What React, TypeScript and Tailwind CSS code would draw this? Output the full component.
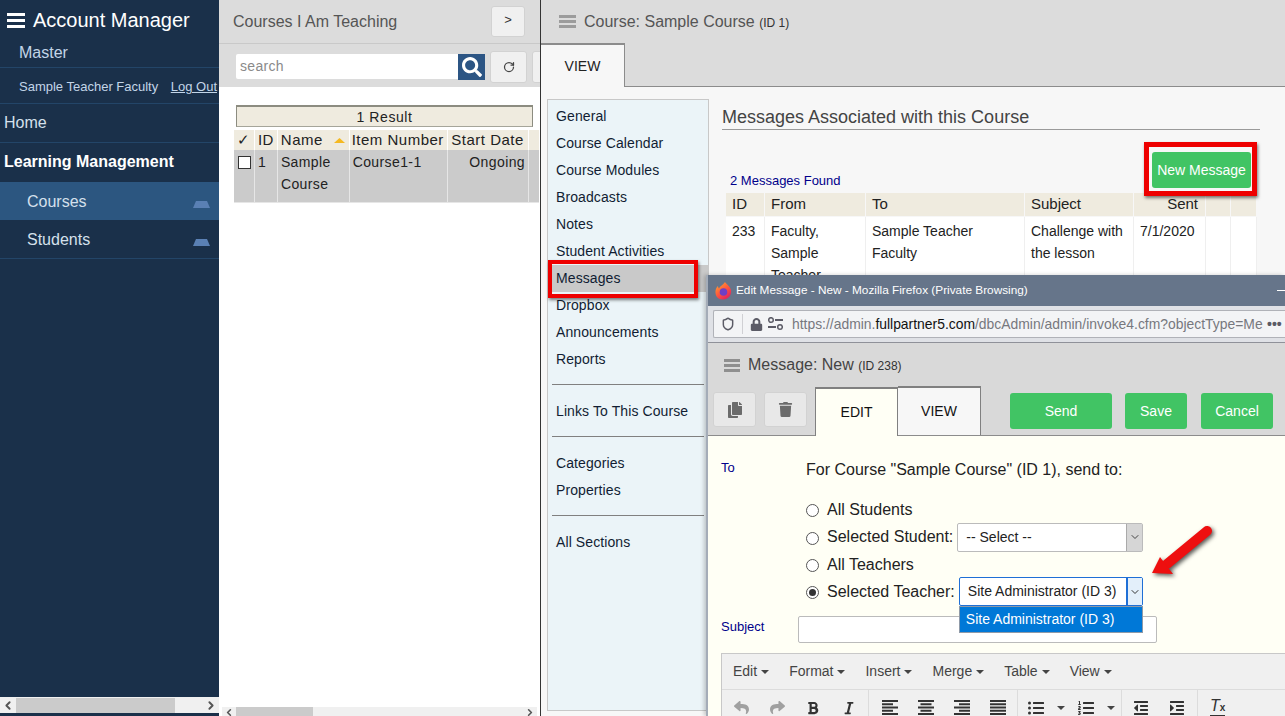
import type { ReactNode } from 'react';
import { ChevronDown, ChevronLeft, ChevronRight, RotateCw, Shield } from 'lucide-react';
import {
  FaBold,
  FaCopy,
  FaIndent,
  FaItalic,
  FaListOl,
  FaListUl,
  FaLock,
  FaOutdent,
  FaReply,
  FaSearch,
  FaShare,
  FaTrash,
} from 'react-icons/fa';

const courseNav = ['General', 'Course Calendar', 'Course Modules', 'Broadcasts', 'Notes', 'Student Activities'];
const editorMenu = ['Edit', 'Format', 'Insert', 'Merge', 'Table', 'View'];

function Bars({ color, w = 18, bar = 3, gap = 3 }: { color: string; w?: number; bar?: number; gap?: number }) {
  return (
    <div className="flex flex-col" style={{ width: w, gap }}>
      <div className={color} style={{ height: bar }} />
      <div className={color} style={{ height: bar }} />
      <div className={color} style={{ height: bar }} />
    </div>
  );
}

function Tray() {
  return (
    <svg width="17" height="7" viewBox="0 0 17 7" className="mt-[5px] shrink-0">
      <polygon points="3,0 14,0 17,7 0,7" fill="#5a80b4" />
    </svg>
  );
}

function Sidebar() {
  return (
    <aside className="relative flex h-full w-[219px] shrink-0 flex-col bg-[#1a304a] text-[#d5e0ec]">
      <div className="flex h-[41px] items-center gap-[8px] pl-[7px] pb-[1px]">
        <Bars color="bg-white" />
        <span className="text-[20px] text-white">Account Manager</span>
      </div>
      <div className="flex h-[27px] items-start border-b border-[#234568] pl-[19px] text-[16px] leading-[23px] text-[#c3d5e8]">
        Master
      </div>
      <div className="flex h-[36px] items-center justify-between border-b border-[#234568] pl-[19px] pr-[2px] pt-[3px] text-[13px] text-[#c3d5e8]">
        <span>Sample Teacher Faculty</span>
        <span className="underline">Log Out</span>
      </div>
      <div className="flex h-[39px] items-center border-b border-[#234568] pl-[4px] text-[16px]">Home</div>
      <div className="flex h-[39px] items-center pb-[2px] pl-[4px] text-[16px] font-bold text-white">Learning Management</div>
      <div className="flex h-[38px] items-center justify-between bg-[#2c5680] pl-[27px] pr-[9px] pt-[1px] text-[16px]">
        <span>Courses</span>
        <Tray />
      </div>
      <div className="flex h-[39px] items-center justify-between border-b border-[#234568] pl-[27px] pr-[9px] pt-[1px] text-[16px]">
        <span>Students</span>
        <Tray />
      </div>
      <div className="absolute bottom-[3px] left-0 right-0 flex h-[16px] items-center bg-[#f0f0f0] text-[#555]">
        <ChevronLeft size={13} strokeWidth={3.5} className="w-[16px] shrink-0" />
        <div className="h-[15px] w-[159px] bg-[#cbcbcb]" />
        <div className="flex-1" />
        <ChevronRight size={13} strokeWidth={3.5} className="w-[16px] shrink-0" />
      </div>
    </aside>
  );
}

function CoursesPanel() {
  return (
    <section className="relative flex h-full w-[322px] shrink-0 flex-col overflow-hidden border-r border-[#333] bg-white">
      <div className="flex h-[44px] shrink-0 items-center justify-between border-b border-[#c9c9c9] bg-[#dcdcdc] pl-[14px] pr-[15px] text-[16px] text-[#555]">
        <span>Courses I Am Teaching</span>
        <div className="flex h-[31px] w-[34px] items-start justify-center rounded-[3px] border border-[#d2d2d2] bg-[#f0f0f0] pt-[3px] text-[13px] text-[#333]">
          &gt;
        </div>
      </div>
      <div className="flex h-[43px] shrink-0 items-center bg-[#dcdcdc] pl-[17px] pt-[2px]">
        <div className="flex h-[25px] w-[222px] shrink-0 items-center rounded-l-[2px] bg-white pl-[4px] text-[14px] tracking-[0.3px] text-[#8a8a8a]">
          search
        </div>
        <div className="flex h-[26px] w-[27px] shrink-0 items-center justify-center bg-[#2c5584] text-white">
          <FaSearch size={20} />
        </div>
        <div className="ml-[5px] flex h-[32px] w-[37px] shrink-0 items-center justify-center rounded-[3px] border border-[#d2d2d2] bg-[#f0f0f0] text-[#444]">
          <RotateCw size={12} strokeWidth={2.5} />
        </div>
        <div className="ml-[5px] h-[32px] w-[20px] shrink-0 rounded-[3px] border border-[#d2d2d2] bg-[#f0f0f0]" />
      </div>
      <div className="ml-[17px] mt-[18px] flex h-[22px] w-[297px] shrink-0 items-center justify-center border border-t-2 border-[#8c8c80] border-b-[#a5a59a] bg-[#efebdf] pt-[1px] text-[14px] tracking-[0.6px] text-[#222]">
        1 Result
      </div>
      <div className="ml-[15px] mt-[3px] flex w-[305px] shrink-0 flex-col overflow-hidden text-[14px] tracking-[0.4px] text-[#222]">
        <div className="flex h-[20px] gap-[1px] bg-white text-[15px] tracking-[0.5px]">
          <div className="flex w-[20px] items-center justify-center bg-[#efebdf]">✓</div>
          <div className="flex w-[22px] items-center justify-center bg-[#efebdf]">ID</div>
          <div className="flex w-[71px] items-center justify-between bg-[#efebdf] pl-[3px] pr-[4px]">
            <span>Name</span>
            <svg width="11" height="5" viewBox="0 0 11 5">
              <polygon points="5.5,0 11,5 0,5" fill="#f5b921" />
            </svg>
          </div>
          <div className="flex w-[98px] items-center bg-[#efebdf] pl-[2px] whitespace-nowrap">Item Number</div>
          <div className="flex w-[80px] items-center bg-[#efebdf] pl-[3px] whitespace-nowrap">Start Date</div>
          <div className="w-[10px] bg-[#efebdf]" />
        </div>
        <div className="flex h-[53px] gap-[1px] border-b border-[#e6e6e6] bg-[#e6e6e6] leading-[22px]">
          <div className="w-[20px] bg-[#cbcbcb] pl-[4px] pt-[6px]">
            <div className="h-[13px] w-[13px] border border-[#333] bg-white" />
          </div>
          <div className="w-[22px] bg-[#cbcbcb] pl-[3px] pt-[1px]">1</div>
          <div className="w-[71px] bg-[#cbcbcb] pl-[3px] pt-[1px]">Sample Course</div>
          <div className="w-[98px] bg-[#cbcbcb] pl-[3px] pt-[1px]">Course1-1</div>
          <div className="w-[80px] bg-[#cbcbcb] pr-[3px] pt-[1px] text-right">Ongoing</div>
          <div className="w-[10px] bg-[#cbcbcb]" />
        </div>
      </div>
      <div className="absolute bottom-0 left-[3px] right-[3px] flex h-[9px] bg-[#f0f0f0] text-[#555]">
        <ChevronLeft size={11} strokeWidth={3.5} className="w-[14px] shrink-0" />
        <div className="h-[9px] w-[77px] bg-[#cbcbcb]" />
        <div className="flex-1" />
        <ChevronRight size={11} strokeWidth={3.5} className="w-[14px] shrink-0" />
      </div>
    </section>
  );
}

function Hr() {
  return <div className="mx-[4px] mb-[13px] mt-[11px] h-px bg-[#808080]" />;
}

function NavItem({ label, active }: { label: string; active?: boolean }) {
  return (
    <div className={`flex h-[27px] items-center pl-[8px] ${active ? 'bg-[#c9c9c9]' : ''}`}>{label}</div>
  );
}

function CourseNav() {
  return (
    <nav className="h-[612px] w-[162px] shrink-0 border border-[#c8c8c8] bg-[#ebf4f8] pt-[3px] text-[14px] tracking-[0.1px] text-[#111d33]">
      {courseNav.map((n) => (
        <NavItem key={n} label={n} />
      ))}
      <NavItem label="Messages" active />
      <NavItem label="Dropbox" />
      <NavItem label="Announcements" />
      <NavItem label="Reports" />
      <Hr />
      <NavItem label="Links To This Course" />
      <Hr />
      <NavItem label="Categories" />
      <NavItem label="Properties" />
      <Hr />
      <NavItem label="All Sections" />
    </nav>
  );
}

function MessagesTable() {
  const cols = ['w-[38px]', 'w-[100px]', 'w-[158px]', 'w-[108px]', 'w-[71px]', 'w-[24px]', 'w-[25px]'];
  return (
    <div className="w-[531px] text-[14px] text-[#222]">
      <div className="flex h-[23px] gap-[1px] text-[15px]">
        <div className={`${cols[0]} flex items-center bg-[#efebdf] pl-[6px]`}>ID</div>
        <div className={`${cols[1]} flex items-center bg-[#efebdf] pl-[6px]`}>From</div>
        <div className={`${cols[2]} flex items-center bg-[#efebdf] pl-[6px]`}>To</div>
        <div className={`${cols[3]} flex items-center bg-[#efebdf] pl-[6px]`}>Subject</div>
        <div className={`${cols[4]} flex items-center justify-end bg-[#efebdf] pr-[7px]`}>Sent</div>
        <div className={`${cols[5]} bg-[#efebdf]`} />
        <div className={`${cols[6]} bg-[#efebdf]`} />
      </div>
      <div className="mt-[1px] flex h-[70px] gap-[1px] bg-[#efefef] leading-[22px]">
        <div className={`${cols[0]} bg-white pl-[6px] pt-[3px]`}>233</div>
        <div className={`${cols[1]} bg-white pl-[6px] pt-[3px]`}>Faculty, Sample Teacher</div>
        <div className={`${cols[2]} bg-white pl-[6px] pr-[40px] pt-[3px]`}>Sample Teacher Faculty</div>
        <div className={`${cols[3]} bg-white pl-[6px] pt-[3px]`}>Challenge with the lesson</div>
        <div className={`${cols[4]} bg-white pl-[6px] pt-[3px]`}>7/1/2020</div>
        <div className={`${cols[5]} bg-white`} />
        <div className={`${cols[6]} bg-white`} />
      </div>
    </div>
  );
}

function CoursePanel() {
  return (
    <section className="flex h-full min-w-0 flex-1 flex-col bg-[#f7f7f7]">
      <div className="flex h-[43px] shrink-0 items-center gap-[8px] bg-[#dcdcdc] pl-[18px] text-[16px] text-[#555]">
        <Bars color="bg-[#9c9c9c]" w={17} bar={3} gap={2} />
        <span>
          Course: Sample Course <span className="text-[12px] text-[#333]">(ID 1)</span>
        </span>
      </div>
      <div className="flex h-[44px] shrink-0 items-stretch border-b border-[#8c8c8c] bg-[#dcdcdc]">
        <div className="-mb-px flex w-[84px] items-center justify-center border-r border-t-2 border-[#8c8c8c] bg-[#f7f7f7] text-[14px] text-[#222]">
          VIEW
        </div>
      </div>
      <div className="flex min-h-0 flex-1 pl-[6px] pt-[12px]">
        <CourseNav />
        <div className="ml-[13px] min-w-0 flex-1">
          <div className="mr-[25px] flex h-[31px] items-center border-b border-[#9a9a9a] pt-[7px] text-[18px] text-[#444]">
            Messages Associated with this Course
          </div>
          <div className="mr-[34px] mt-[22px] flex h-[41px] items-end justify-between">
            <span className="mb-[5px] pl-[8px] text-[13px] leading-[14px] text-[#00008b]">2 Messages Found</span>
            <div className="flex h-[36px] w-[99px] items-center justify-center self-start rounded-[3px] bg-[#41c464] text-[14px] text-white">
              New Message
            </div>
          </div>
          <div className="pl-[4px]">
            <MessagesTable />
          </div>
        </div>
      </div>
    </section>
  );
}

function Radio({ on }: { on?: boolean }) {
  return (
    <div className="mt-[2px] flex h-[13px] w-[13px] shrink-0 items-center justify-center rounded-full border border-[#555] bg-white">
      {on && <div className="h-[7px] w-[7px] rounded-full bg-[#333]" />}
    </div>
  );
}

function FirefoxLogo() {
  return (
    <svg width="17" height="18" viewBox="0 0 17 18">
      <defs>
        <linearGradient id="ff" x1="0" y1="0" x2="0.7" y2="1">
          <stop offset="0" stopColor="#ffb02e" />
          <stop offset="0.55" stopColor="#ff5a3c" />
          <stop offset="1" stopColor="#e3215f" />
        </linearGradient>
      </defs>
      <path d="M10 0c1 2 5 4 6 8 1 5-3 9.500-8 9.500S0 14 0.500 9C1 6 2 5 3 4c0 1 .5 2 1 2.500C5 4 8 3 10 0z" fill="url(#ff)" />
      <circle cx="8.500" cy="10" r="3.800" fill="#6f3fc4" />
    </svg>
  );
}

function TuneIcon() {
  return (
    <svg width="15" height="14" viewBox="0 0 15 14" fill="#5b5b66">
      <circle cx="3" cy="3" r="2.300" fill="none" stroke="#5b5b66" strokeWidth="1.500" />
      <rect x="7" y="2" width="8" height="2" />
      <rect x="0" y="9" width="8" height="2" />
      <circle cx="12" cy="10" r="2.300" fill="none" stroke="#5b5b66" strokeWidth="1.500" />
    </svg>
  );
}

function GreenButton({ label, w }: { label: string; w: string }) {
  return (
    <div className={`flex h-[36px] items-center justify-center rounded-[3px] bg-[#41c464] text-[14px] text-white ${w}`}>
      {label}
    </div>
  );
}

// five line tinymce style alignment glyph, short lines placed per alignment
function AlignIcon({ align }: { align: 'left' | 'center' | 'right' | 'justify' }) {
  const short = align === 'justify' ? 16 : 11;
  const x = align === 'left' || align === 'justify' ? 0 : align === 'center' ? 2.5 : 5;
  return (
    <svg width="16" height="15" viewBox="0 0 16 15" fill="#333">
      <rect x="0" y="0" width="16" height="2" />
      <rect x={x} y="3.250" width={short} height="2" />
      <rect x="0" y="6.500" width="16" height="2" />
      <rect x={x} y="9.750" width={short} height="2" />
      <rect x="0" y="13" width="16" height="2" />
    </svg>
  );
}

function Cell({ w = 'w-[36px]', children }: { w?: string; children: ReactNode }) {
  return <div className={`flex shrink-0 items-center justify-center ${w}`}>{children}</div>;
}

function Caret() {
  return <div className="h-0 w-0 border-x-[4px] border-t-[4px] border-x-transparent border-t-[#444]" />;
}

function Sep() {
  return <div className="h-[28px] w-px shrink-0 self-start bg-[#dcdcdc]" />;
}

function EditorToolbar() {
  return (
    <div className="flex h-[36px] items-center border-t border-[#dcdcdc] pl-[1px] text-[#333]">
      <Cell><FaReply size={15} className="text-[#a0a0a0]" /></Cell>
      <Cell><FaShare size={15} className="text-[#a0a0a0]" /></Cell>
      <Cell><FaBold size={14} /></Cell>
      <Cell><FaItalic size={14} /></Cell>
      <div className="w-[1px]" />
      <Sep />
      <div className="w-[3px]" />
      <Cell><AlignIcon align="left" /></Cell>
      <Cell><AlignIcon align="center" /></Cell>
      <Cell><AlignIcon align="right" /></Cell>
      <Cell><AlignIcon align="justify" /></Cell>
      <div className="w-[1px]" />
      <Sep />
      <div className="w-[1px]" />
      <Cell w="w-[34px]"><FaListUl size={16} /></Cell>
      <Cell w="w-[16px]"><Caret /></Cell>
      <Cell w="w-[34px]"><FaListOl size={16} /></Cell>
      <Cell w="w-[16px]"><Caret /></Cell>
      <div className="w-[2px]" />
      <Sep />
      <Cell w="w-[37px]"><FaOutdent size={16} /></Cell>
      <Cell><FaIndent size={16} /></Cell>
      <div className="w-[2px]" />
      <Sep />
      <span className="ml-[12px] border-b-2 border-[#333] text-[16px] leading-[15px] italic text-[#333]">
        T<span className="text-[10px] font-bold not-italic">x</span>
      </span>
    </div>
  );
}

function MessageWindow() {
  return (
    <div className="absolute left-[706px] top-[275px] flex h-[441px] w-[579px] flex-col overflow-hidden border-l-2 border-[#a4acb8] bg-[#fffff5] shadow-[-2px_0_4px_rgba(0,0,0,0.2)]">
      <div className="flex h-[31px] shrink-0 items-center justify-between bg-[#66758a] pl-[7px] pr-0 text-[11.8px] text-white">
        <div className="flex items-center gap-[4px]">
          <FirefoxLogo />
          <span>Edit Message - New - Mozilla Firefox (Private Browsing)</span>
        </div>
        <div className="h-px w-[8px] bg-white" />
      </div>
      <div className="flex h-[37px] shrink-0 items-center border-b border-[#8f9199] bg-[#dfe1e6] pl-[5px]">
        <div className="flex h-[28px] flex-1 items-center rounded-l-[2px] border border-r-0 border-[#b0b2b8] bg-[#f3f4f6] pl-[7px] text-[13.9px] text-[#77787e]">
          <Shield size={14} strokeWidth={2.5} className="shrink-0 text-[#5b5b66]" />
          <div className="ml-[7px] h-[20px] w-px bg-[#d0d0d4]" />
          <FaLock size={13} className="ml-[7px] shrink-0 text-[#5b5b66]" />
          <div className="ml-[5px] shrink-0">
            <TuneIcon />
          </div>
          <span className="ml-[9px] w-[472px] whitespace-nowrap">
            https://admin.<span className="text-[#111]">fullpartner5.com</span>/dbcAdmin/admin/invoke4.cfm?objectType=Me
          </span>
          <span className="ml-[3px] text-[14px] font-bold leading-none text-[#5b5b66]">•••</span>
        </div>
      </div>
      <div className="flex h-[44px] shrink-0 items-center gap-[8px] bg-[#d9d9d9] pl-[16px] text-[16px] text-[#444]">
        <Bars color="bg-[#8f8f8f]" w={16} bar={3} gap={2} />
        <span>
          Message: New <span className="text-[12px] text-[#333]">(ID 238)</span>
        </span>
      </div>
      <div className="flex h-[49px] shrink-0 items-end border-b border-[#8c8c8c] bg-[#d9d9d9] pl-[5px]">
        <div className="mb-[8px] flex h-[35px] w-[43px] items-center justify-center rounded-[3px] border border-[#d2d2d2] bg-[#e8e8e8] text-[#6b6b6b]">
          <FaCopy size={16} />
        </div>
        <div className="mb-[8px] ml-[8px] flex h-[35px] w-[43px] items-center justify-center rounded-[3px] border border-[#d2d2d2] bg-[#e8e8e8] text-[#6b6b6b]">
          <FaTrash size={15} />
        </div>
        <div className="-mb-px ml-[8px] flex h-[49px] w-[83px] items-center justify-center border-x border-t-2 border-[#808080] border-b-transparent bg-[#fffff5] text-[14px] text-[#111]">
          EDIT
        </div>
        <div className="flex h-[49px] w-[83px] items-center justify-center border-r border-t-2 border-[#808080] bg-[#f7f7f7] text-[14px] text-[#111]">
          VIEW
        </div>
        <div className="mb-[6px] ml-[29px] flex items-center">
          <GreenButton label="Send" w="w-[102px]" />
          <div className="w-[13px]" />
          <GreenButton label="Save" w="w-[62px]" />
          <div className="w-[14px]" />
          <GreenButton label="Cancel" w="w-[72px]" />
        </div>
      </div>
      <div className="flex min-h-0 flex-1 flex-col pl-[13px] text-[16px] text-[#222]">
        <div className="mt-[24px] flex h-[20px] shrink-0 items-center">
          <span className="w-[85px] pb-[4px] text-[13px] text-[#00008b]">To</span>
          <span>For Course "Sample Course" (ID 1), send to:</span>
        </div>
        <div className="ml-[85px] mt-[16px] flex h-[27px] shrink-0 items-center gap-[8px]">
          <Radio />
          <span>All Students</span>
        </div>
        <div className="ml-[85px] flex h-[28px] shrink-0 items-center gap-[8px]">
          <Radio />
          <span>Selected Student:</span>
          <div className="ml-[-4px] flex h-[29px] w-[186px] items-center justify-between rounded-[2px] border border-[#bbb] bg-white pl-[8px] text-[14px]">
            <span>-- Select --</span>
            <div className="flex h-full w-[16px] items-center justify-center border-l border-[#aaa] bg-[#d6d6d6] text-[#444]">
              <ChevronDown size={12} />
            </div>
          </div>
        </div>
        <div className="ml-[85px] flex h-[27px] shrink-0 items-center gap-[8px]">
          <Radio />
          <span>All Teachers</span>
        </div>
        <div className="ml-[85px] flex h-[27px] shrink-0 items-center gap-[8px]">
          <Radio on />
          <span>Selected Teacher:</span>
          <div className="relative ml-[-4px] flex h-[29px] w-[184px] items-center justify-between rounded-[2px] border border-[#1f6fd6] bg-white pl-[8px] text-[14px]">
            <span>Site Administrator (ID 3)</span>
            <div className="flex h-full w-[16px] items-center justify-center border-l-2 border-[#1f6fd6] bg-[#e3effa] text-[#333]">
              <ChevronDown size={12} />
            </div>
            <div className="absolute left-[-1px] top-[28px] z-10 flex h-[27px] w-[184px] items-center border border-[#8f9aa8] bg-[#0078d7] pl-[6px] text-white">
              Site Administrator (ID 3)
            </div>
          </div>
        </div>
        <div className="mt-[11px] flex h-[27px] shrink-0 items-start">
          <span className="w-[77px] pt-[1px] text-[13px] text-[#00008b]">Subject</span>
          <div className="h-[27px] w-[359px] rounded-[2px] border border-[#bbb] bg-white" />
        </div>
        <div className="mt-[10px] flex-1 shrink-0 border border-r-0 border-[#c8c8c8] bg-[#f0f0f0] text-[14px] text-[#444]">
          <div className="flex h-[35px] items-center gap-[20px] pl-[11px]">
            {editorMenu.map((m) => (
              <span key={m} className="flex items-center gap-[4px]">
                {m}
                <Caret />
              </span>
            ))}
          </div>
          <EditorToolbar />
        </div>
      </div>
    </div>
  );
}

export default function App() {
  return (
    <div className="relative flex h-[716px] w-[1285px] overflow-hidden bg-white font-['Liberation_Sans',Arial,sans-serif]">
      <Sidebar />
      <CoursesPanel />
      <CoursePanel />
      <MessageWindow />
      <div className="pointer-events-none absolute left-[548px] top-[260px] h-[38px] w-[150px] border-[4px] border-[#ee0000] shadow-[1px_2px_3px_rgba(0,0,0,0.5)]" />
      <div className="pointer-events-none absolute left-[1144px] top-[142px] h-[54px] w-[113px] border-[5px] border-[#ee0000] shadow-[1px_2px_3px_rgba(0,0,0,0.5)]" />
      <svg width="70" height="62" viewBox="0 0 70 62" className="pointer-events-none absolute left-[1150px] top-[522px] drop-shadow-[2px_2px_2px_rgba(0,0,0,0.65)]">
        <line x1="57" y1="9" x2="17" y2="42" stroke="#ee0f0f" strokeWidth="10" strokeLinecap="round" />
        <polygon points="2,51 10,35 23,52" fill="#ee0f0f" />
      </svg>
    </div>
  );
}
